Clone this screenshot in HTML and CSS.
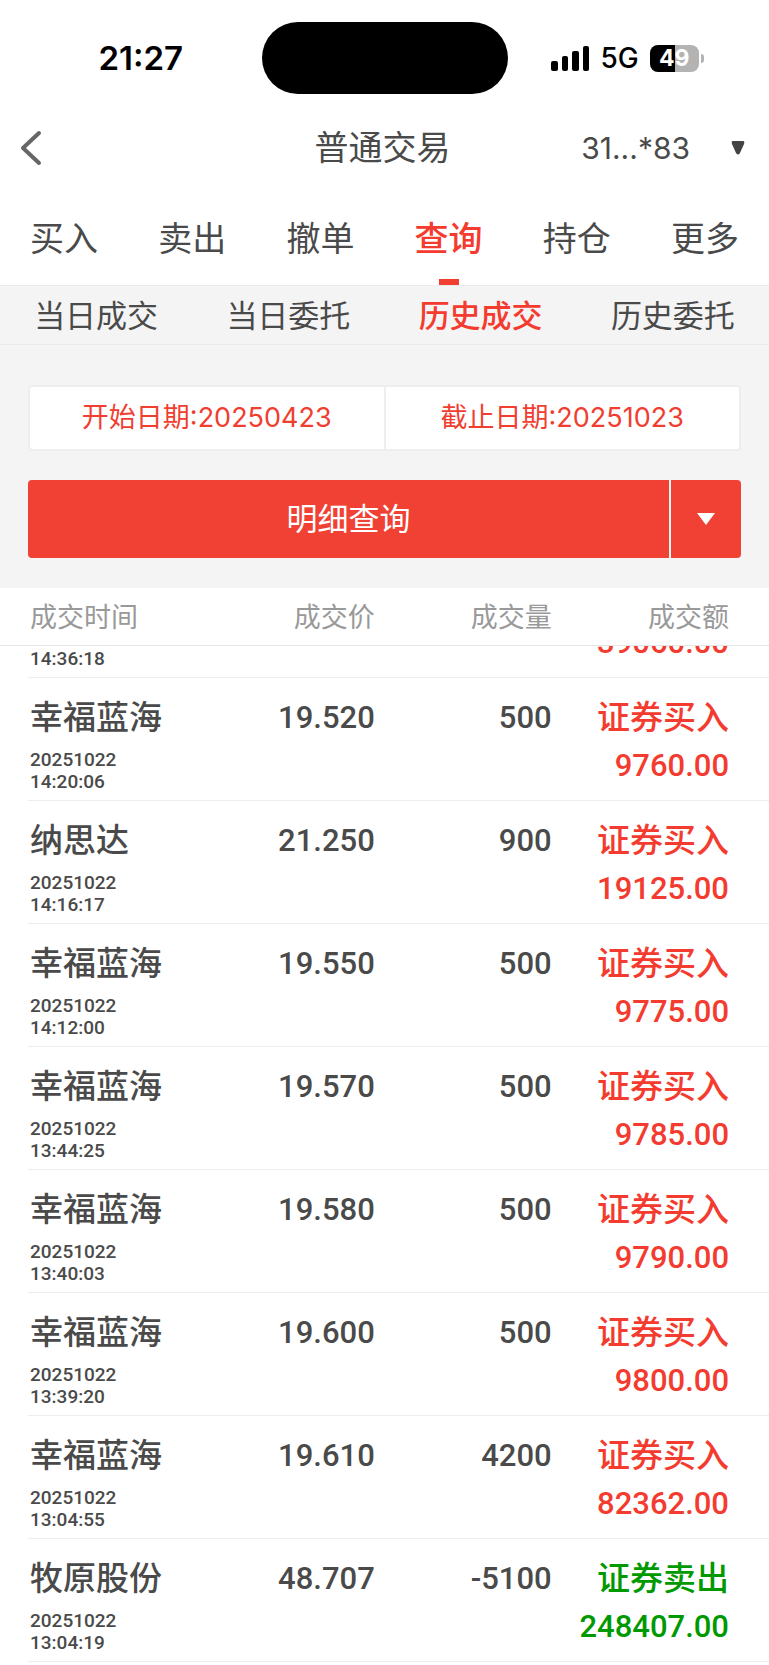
FILE: index.html
```html
<!DOCTYPE html>
<html lang="zh-CN">
<head>
    <meta charset="utf-8">
    <meta name="viewport" content="width=device-width, initial-scale=1">
    <title>普通交易</title>
    <link rel="stylesheet" href="styles.css">
</head>
<body>
    <div class="status-bar">
        <div class="status-time">21:27</div>
        <div class="island"></div>
        <div class="status-right">
            <svg class="signal" width="39" height="25" viewBox="0 0 39 25">
                <rect x="0" y="15" width="7" height="10" rx="2"/>
                <rect x="11" y="10" width="6" height="15" rx="2"/>
                <rect x="21" y="5" width="7" height="20" rx="2"/>
                <rect x="32" y="0" width="6" height="25" rx="2"/>
            </svg>
            <span class="network">5G</span>
            <div class="battery"><span class="battery-level">49</span><i class="battery-cap"></i></div>
        </div>
    </div>

    <header class="nav">
        <button class="back" aria-label="返回">
            <svg width="22" height="36" viewBox="0 0 22 36"><path d="M19 3 L3 18 L19 33"/></svg>
        </button>
        <h1>普通交易</h1>
        <button class="account">
            <span>31...*83</span>
            <svg width="14" height="14" viewBox="0 0 14 14"><path d="M2 0 H12 Q14 0 13 3 L9 12 Q7 15 5 12 L1 3 Q0 0 2 0 Z"/></svg>
        </button>
    </header>

    <nav class="tabs">
        <a href="#">买入</a>
        <a href="#">卖出</a>
        <a href="#">撤单</a>
        <a href="#" class="active">查询</a>
        <a href="#">持仓</a>
        <a href="#">更多</a>
    </nav>

    <nav class="sub-tabs">
        <a href="#">当日成交</a>
        <a href="#">当日委托</a>
        <a href="#" class="active">历史成交</a>
        <a href="#">历史委托</a>
    </nav>

    <section class="query">
        <div class="dates">
            <button>开始日期:20250423</button>
            <button>截止日期:20251023</button>
        </div>
        <div class="query-buttons">
            <button class="query-main">明细查询</button>
            <button class="query-more" aria-label="更多查询">
                <svg width="18" height="12" viewBox="0 0 18 12"><path d="M0 0 H18 L9 12 Z"/></svg>
            </button>
        </div>
    </section>

    <main class="list" id="list">
        <table>
            <thead>
                <tr><th>成交时间</th><th>成交价</th><th>成交量</th><th>成交额</th></tr>
            </thead>
            <tbody>
                <tr>
                    <td><b>幸福蓝海</b><small>20251022<br>14:36:18</small></td>
                    <td>19.530</td>
                    <td>2000</td>
                    <td class="buy"><b>证券买入</b>39060.00</td>
                </tr>
                <tr>
                    <td><b>幸福蓝海</b><small>20251022<br>14:20:06</small></td>
                    <td>19.520</td>
                    <td>500</td>
                    <td class="buy"><b>证券买入</b>9760.00</td>
                </tr>
                <tr>
                    <td><b>纳思达</b><small>20251022<br>14:16:17</small></td>
                    <td>21.250</td>
                    <td>900</td>
                    <td class="buy"><b>证券买入</b>19125.00</td>
                </tr>
                <tr>
                    <td><b>幸福蓝海</b><small>20251022<br>14:12:00</small></td>
                    <td>19.550</td>
                    <td>500</td>
                    <td class="buy"><b>证券买入</b>9775.00</td>
                </tr>
                <tr>
                    <td><b>幸福蓝海</b><small>20251022<br>13:44:25</small></td>
                    <td>19.570</td>
                    <td>500</td>
                    <td class="buy"><b>证券买入</b>9785.00</td>
                </tr>
                <tr>
                    <td><b>幸福蓝海</b><small>20251022<br>13:40:03</small></td>
                    <td>19.580</td>
                    <td>500</td>
                    <td class="buy"><b>证券买入</b>9790.00</td>
                </tr>
                <tr>
                    <td><b>幸福蓝海</b><small>20251022<br>13:39:20</small></td>
                    <td>19.600</td>
                    <td>500</td>
                    <td class="buy"><b>证券买入</b>9800.00</td>
                </tr>
                <tr>
                    <td><b>幸福蓝海</b><small>20251022<br>13:04:55</small></td>
                    <td>19.610</td>
                    <td>4200</td>
                    <td class="buy"><b>证券买入</b>82362.00</td>
                </tr>
                <tr>
                    <td><b>牧原股份</b><small>20251022<br>13:04:19</small></td>
                    <td>48.707</td>
                    <td>-5100</td>
                    <td class="sell"><b>证券卖出</b>248407.00</td>
                </tr>
            </tbody>
        </table>
    </main>

<script>
        // 第一行滚动到表头下面
        document.getElementById('list').scrollTop = 91;
    </script>
</body>
</html>
```
FILE: styles.css
```css
* {
    box-sizing: border-box;
}

body {
    display: flex;
    flex-direction: column;
    height: 100vh;
    margin: 0;
    background-color: #fff;
    color: #4a4a4a;
    font-family: Inter, "Noto Sans CJK SC", sans-serif;
}

button {
    padding: 0;
    border: none;
    background: none;
    color: inherit;
    font: inherit;
    cursor: pointer;
}

a {
    color: inherit;
    text-decoration: none;
}

/* 状态栏 */
.status-bar {
    display: grid;
    grid-template-columns: 1fr 246px 1fr;
    align-items: center;
    height: 112px;
    padding-top: 4px;
    color: #000;
}

.status-time {
    padding-left: 20px;
    text-align: center;
    font-size: 33px;
    font-weight: 600;
}

.island {
    height: 72px;
    border-radius: 36px;
    background-color: #000;
}

.status-right {
    display: flex;
    align-items: center;
    gap: 11px;
    padding-left: 43px;
}

.network {
    font-size: 28px;
    font-weight: 500;
}

.battery {
    position: relative;
    width: 49px;
    height: 27px;
    border-radius: 8px;
    background: linear-gradient(to right, #000 50%, #b3b3b3 50%);
    color: #fff;
    text-align: center;
    font-size: 23px;
    font-weight: 700;
    line-height: 27px;
}

.battery-cap {
    position: absolute;
    top: 9px;
    right: -5px;
    width: 3px;
    height: 9px;
    border-radius: 0 3px 3px 0;
    background-color: #b3b3b3;
}

/* 标题栏 */
.nav {
    display: grid;
    grid-template-columns: 1fr auto 1fr;
    align-items: center;
    height: 72px;
    padding: 0 24px 0 20px;
}

.nav h1 {
    margin: 0;
    padding-bottom: 5px;
    font-size: 34px;
    font-weight: 400;
}

.back {
    display: flex;
}

.back path {
    fill: none;
    stroke: #666;
    stroke-width: 4;
    stroke-linecap: round;
    stroke-linejoin: round;
}

.account {
    display: flex;
    align-items: center;
    justify-content: flex-end;
    gap: 41px;
    font-size: 30px;
}

.account path {
    fill: #444;
}

/* 一级、二级菜单 */
.tabs {
    display: flex;
    height: 102px;
    border-bottom: 1px solid #ebebeb;
    font-size: 34px;
    line-height: 110px;
}

.tabs a,
.sub-tabs a {
    flex: 1;
    text-align: center;
}

.tabs .active,
.sub-tabs .active {
    color: #f43b2f;
    font-weight: 500;
}

.tabs .active {
    position: relative;
}

.tabs .active::after {
    content: "";
    position: absolute;
    left: 50%;
    bottom: 0;
    width: 20px;
    height: 6px;
    margin-left: -10px;
    background-color: #f03e31;
}

.sub-tabs {
    display: flex;
    height: 59px;
    border-bottom: 1px solid #ebebeb;
    background-color: #f4f4f4;
    font-size: 31px;
    line-height: 60px;
}

/* 查询条件 */
.query {
    padding: 40px 28px 30px;
    background-color: #f4f4f4;
}

.dates {
    display: flex;
    height: 66px;
    margin-bottom: 29px;
    border: 2px solid #eee;
    border-radius: 4px;
    background-color: #fff;
    color: #f03e31;
    font-size: 27px;
}

.dates button {
    flex: 1;
    padding-bottom: 5px;
}

.dates button + button {
    border-left: 2px solid #eee;
}

.query-buttons {
    display: flex;
    gap: 2px;
    height: 78px;
    border-radius: 4px;
    overflow: hidden;
    color: #fff;
    font-size: 31px;
}

.query-main {
    flex: 1;
    padding-bottom: 5px;
    background-color: #f04134;
}

.query-more {
    display: flex;
    align-items: center;
    justify-content: center;
    width: 70px;
    background-color: #f04134;
}

.query-more path {
    fill: #fff;
}

/* 成交列表 */
.list {
    flex: 1;
    min-height: 0;
    padding-bottom: 30px;
    overflow-y: auto;
    scrollbar-width: none;
}

table {
    width: 100%;
    table-layout: fixed;
    border-spacing: 0;
}

th {
    position: sticky;
    top: 0;
    width: 24%;
    height: 58px;
    padding: 0 2px 2px 0;
    border-bottom: 1px solid #e5e5e5;
    background-color: #fff;
    color: #999;
    text-align: right;
    font-size: 27px;
    font-weight: 400;
}

th:first-child {
    width: 25%;
}

th:nth-child(3) {
    width: 23%;
}

th:last-child {
    width: 28%;
}

tbody tr {
    background: linear-gradient(#eee, #eee) 28px bottom / 100% 1px no-repeat;
}

td {
    height: 123px;
    padding: 16px 2px 0 0;
    vertical-align: top;
    text-align: right;
    font-family: Roboto, "Noto Sans CJK SC", sans-serif;
    font-size: 31px;
    font-weight: 500;
    line-height: 48px;
}

td b {
    display: block;
    font-size: 33px;
    font-weight: 500;
}

th:first-child,
td:first-child {
    padding-left: 30px;
    text-align: left;
    white-space: nowrap;
}

th:last-child,
td:last-child {
    padding-right: 40px;
}

td small {
    display: block;
    margin-top: 7px;
    font-size: 19px;
    line-height: 22px;
}

.buy {
    color: #f43b2f;
}

.sell {
    color: #090;
}
```
